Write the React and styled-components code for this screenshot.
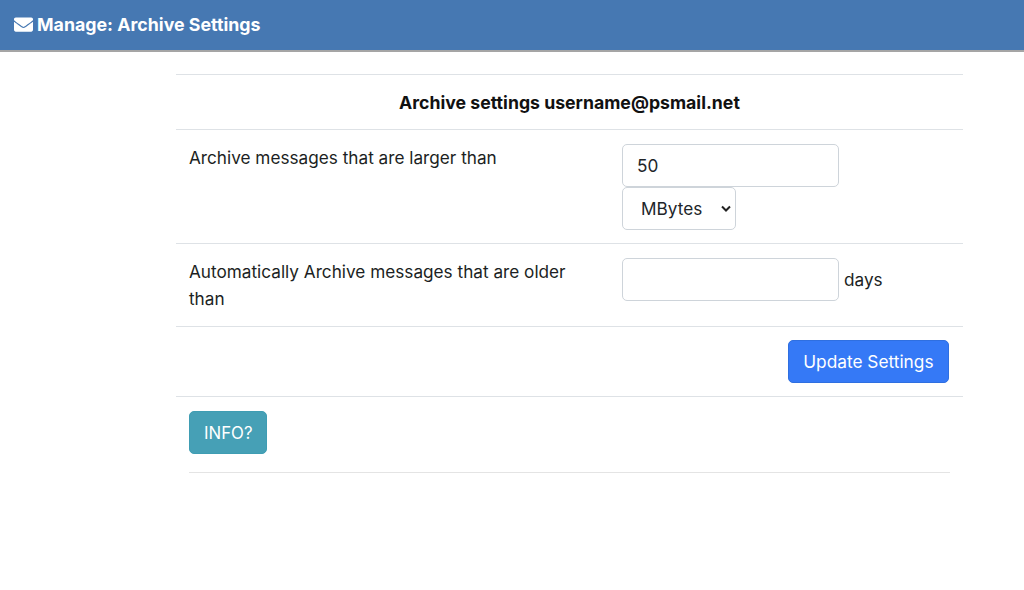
import React from "react";
import styled, { createGlobalStyle } from "styled-components";
import { FaEnvelope } from "react-icons/fa";

const GlobalStyle = createGlobalStyle`
  html, body {
    margin: 0;
    padding: 0;
    background: #ffffff;
    font-family: Inter, "Liberation Sans", sans-serif;
    font-size: 17.2px;
    color: #1c1f23;
  }
`;

const Header = styled.header`
  display: flex;
  align-items: center;
  gap: 4px;
  height: 48px;
  padding: 0 14px 2px;
  background: #4678b2;
  border-bottom: 2px solid #a5a5a5;
  color: #ffffff;
  font-size: 17.8px;
  font-weight: 700;
`;

const Content = styled.main`
  width: 787px;
  margin: 22px 0 0 176px;
`;

const Row = styled.div`
  display: grid;
  grid-template-columns: 433px 1fr;
  padding: 14px 13px ${(p) => p.$bottom || 13}px;
  border-bottom: 1px solid #dee2e6;
  line-height: 27px;
`;

const TitleRow = styled.div`
  padding: 13px 13px 12px;
  border-top: 1px solid #dee2e6;
  border-bottom: 1px solid #dee2e6;
  text-align: center;
  font-size: 17.7px;
  font-weight: 700;
  line-height: 29px;
  color: #111111;
`;

const Label = styled.div`
  padding-right: 26px;
`;

const Control = styled.div`
  display: flex;
  flex-direction: ${(p) => (p.$stack ? "column" : "row")};
  align-items: ${(p) => (p.$stack ? "flex-start" : "center")};
  align-self: start;
  gap: ${(p) => (p.$stack ? "0" : "5px")};
`;

const TextInput = styled.input`
  width: 217px;
  height: 43px;
  box-sizing: border-box;
  padding: 0 14px;
  border: 1px solid #ced4da;
  border-radius: 5px;
  background: #ffffff;
  font: inherit;
  color: #212529;
`;

const SelectWrap = styled.div`
  position: relative;
  width: 114px;
  height: 43px;
`;

const Select = styled.select`
  appearance: none;
  width: 100%;
  height: 100%;
  box-sizing: border-box;
  padding: 0 18px;
  border: 1px solid #ced4da;
  border-radius: 5px;
  background: #ffffff;
  font: inherit;
  color: #212529;
`;

const Chevron = styled.svg`
  position: absolute;
  top: 18px;
  right: 5px;
  width: 10px;
  height: 7px;
  pointer-events: none;
`;

const ButtonRow = styled.div`
  display: flex;
  justify-content: flex-end;
  padding: 13px 14px 13px 13px;
  border-bottom: 1px solid #dee2e6;
`;

const Button = styled.button`
  height: 43px;
  padding: 0 ${(p) => (p.$info ? "14px" : "14.5px")};
  border: 1px solid ${(p) => (p.$info ? "#3f9db3" : "#2f6fe0")};
  border-radius: 5px;
  background: ${(p) => (p.$info ? "#46a0b6" : "#3579f6")};
  color: #ffffff;
  font-family: inherit;
  font-size: ${(p) => (p.$info ? "16.8px" : "17.3px")};
`;

const InfoBlock = styled.div`
  margin: 14px 13.5px 0 13px;
  padding-bottom: 18px;
  border-bottom: 1px solid #e4e4e4;
`;

export default function App() {
  return (
    <>
      <GlobalStyle />
      <Header>
        <FaEnvelope size={19} />
        <span>Manage: Archive Settings</span>
      </Header>
      <Content>
        <TitleRow>Archive settings username@psmail.net</TitleRow>
        <Row>
          <Label>Archive messages that are larger than</Label>
          <Control $stack>
            <TextInput defaultValue="50" />
            <SelectWrap>
              <Select defaultValue="MBytes">
                <option>MBytes</option>
                <option>KBytes</option>
              </Select>
              <Chevron viewBox="0 0 10 7">
                <path d="M1 1.5 L5 5.5 L9 1.5" fill="none" stroke="#222" strokeWidth="2" />
              </Chevron>
            </SelectWrap>
          </Control>
        </Row>
        <Row $bottom={14}>
          <Label>Automatically Archive messages that are older than</Label>
          <Control>
            <TextInput />
            <span>days</span>
          </Control>
        </Row>
        <ButtonRow>
          <Button>Update Settings</Button>
        </ButtonRow>
        <InfoBlock>
          <Button $info>INFO?</Button>
        </InfoBlock>
      </Content>
    </>
  );
}
